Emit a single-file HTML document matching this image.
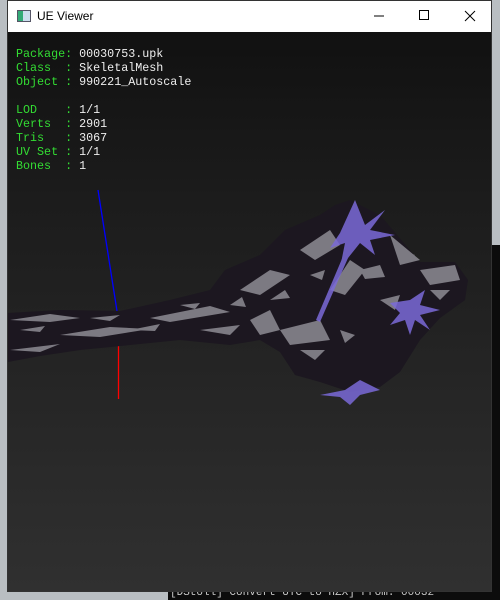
<!DOCTYPE html>
<html><head><style>
*{margin:0;padding:0}
body{width:500px;height:600px;overflow:hidden;position:relative;background:#b9bec2;font-family:"Liberation Sans",sans-serif}
.con{position:absolute;left:492px;top:245px;width:8px;height:355px;background:#0c0c0c}
.bot{position:absolute;left:168px;top:592px;width:332px;height:8px;background:#0c0c0c;overflow:hidden}
.bot span{position:absolute;top:-5px;left:2px;font:11px "Liberation Mono",monospace;color:#c8c8c8;white-space:nowrap}
.win{position:absolute;left:7px;top:0;width:485px;height:592px;border:1px solid #333;box-sizing:border-box;background:linear-gradient(#0f0f0f 0px,#1c1c1c 200px,#262626 400px,#303030 592px)}
.tb{position:absolute;left:0;top:0;width:100%;height:31px;background:#fff}
.tb .t{position:absolute;left:29px;top:8px;font-size:12px;color:#000}
.ico{position:absolute;left:9px;top:9px;width:12px;height:10px;border:1px solid #556;background:linear-gradient(90deg,#3a7 0 40%,#cde 40%)}
.txt{position:absolute;left:8px;top:46px;font:11.7px/14px "Liberation Mono",monospace;color:#eee;white-space:pre}
.g{color:#3d3}
</style></head><body>
<div class="con"></div>
<div class="bot"><span>[DStoll] Convert UTC to HZX] From: 00032</span></div>
<div class="win">
<div class="tb"><div class="ico"></div><div class="t">UE Viewer</div>
<svg width="485" height="31" style="position:absolute;left:0;top:0"><path d="M366 15h10" stroke="#000"/><rect x="411.5" y="9.5" width="9" height="9" fill="none" stroke="#000"/><path d="M457 10l10 10M467 10l-10 10" stroke="#000"/></svg></div>
<div class="txt"><span class="g">Package:</span> 00030753.upk
<span class="g">Class  :</span> SkeletalMesh
<span class="g">Object :</span> 990221_Autoscale

<span class="g">LOD    :</span> 1/1
<span class="g">Verts  :</span> 2901
<span class="g">Tris   :</span> 3067
<span class="g">UV Set :</span> 1/1
<span class="g">Bones  :</span> 1</div>
</div>
<svg width="500" height="600" style="position:absolute;left:0;top:0">
<line x1="98" y1="190" x2="117" y2="311" stroke="#00f" stroke-width="1.3"/>
<line x1="118.5" y1="333" x2="118.5" y2="399" stroke="#f00" stroke-width="1.3"/>
<path d="M8 313L60 310L120 311L170 300L210 290L225 270L260 255L285 230L320 215L335 205L350 200L380 215L420 262L455 262L468 280L465 300L440 318L420 340L400 372L380 387L350 392L320 382L295 375L280 352L260 340L230 345L180 340L130 345L80 350L40 356L8 362Z" fill="#1c1720"/>
<g fill="#bdbcc4" opacity="0.6">
<path d="M10 320l40-6 30 4-30 4zM60 335l50-8 40 2-50 8zM10 350l50-6-20 8zM150 318l60-12 20 6-60 10zM240 290l30-20 20 5-30 20zM300 250l30-20 10 15-25 15zM390 235l30 25-20 5zM420 270l35-5 5 15-30 5zM280 330l40-10 10 20-40 5zM330 290l20-30 15 10-20 25zM250 320l20-10 10 20-20 5zM200 330l40-5-10 10z"/>
<path d="M20 330l25-4-5 6zM90 318l30-3-10 6zM130 330l30-6-5 7zM180 305l20-2-5 6zM270 300l15-10 5 8zM310 275l15-5-3 10zM360 270l20-5 5 12-20 2zM380 300l20-5-5 15zM300 350l25 0-10 10zM430 290l20 0-10 10zM400 250l15 5-10 5zM340 330l15 5-10 8zM230 305l12-8 4 10z"/>
</g>
<g fill="#7a6ad8" opacity="0.85">
<path d="M355 200l10 25 20-15-15 20 25 5-25 5 5 15-15-12-20 25 5-25-15 5 10-15z"/>
<path d="M410 300l15-10-5 15 20 5-20 5 10 15-15-10-5 15-5-15-15 5 10-12-10-10z"/>
<path d="M320 395l25-5 15-10 20 10-20 5-10 10-10-8z"/>
<path d="M350 240l5 2-35 80-4-2z"/>
</g>
</svg>
</body></html>
